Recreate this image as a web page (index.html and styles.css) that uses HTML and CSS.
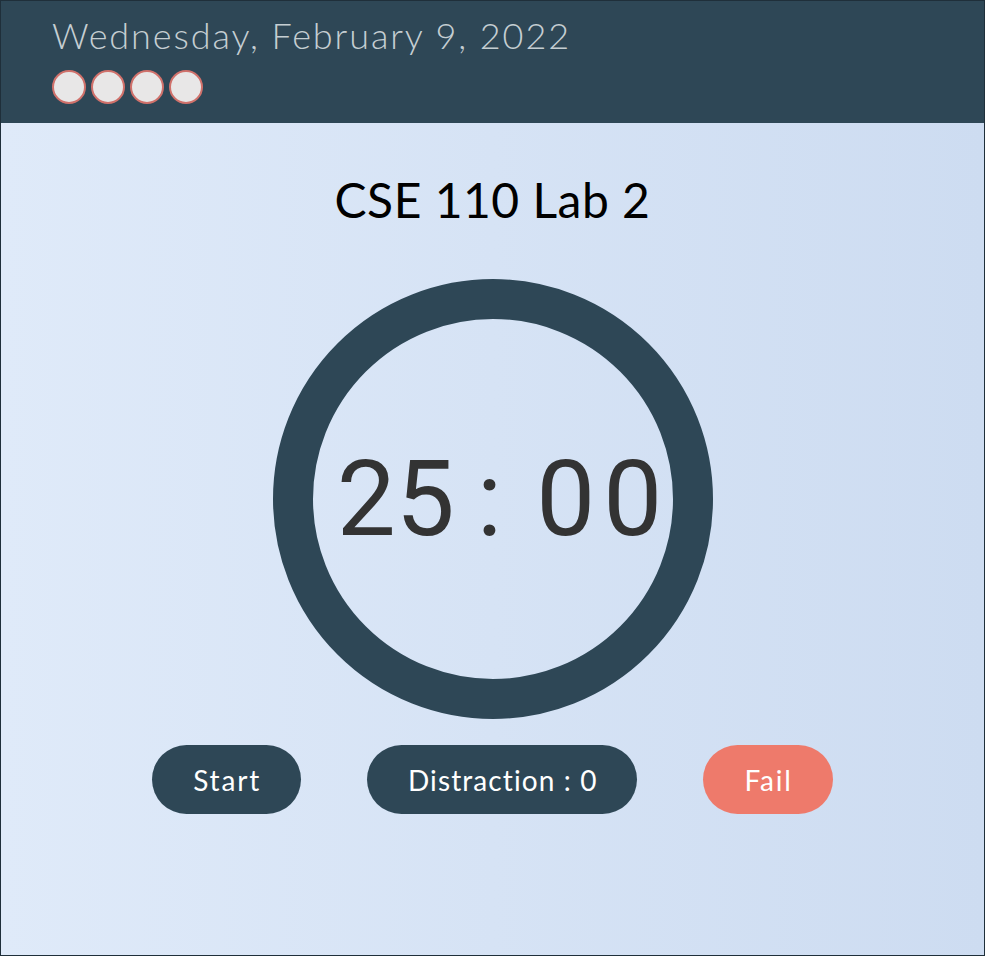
FILE: index.html
```html
<!DOCTYPE html>
<html lang="en">
<head>
<meta charset="utf-8">
<title>Pomodoro</title>
<link rel="stylesheet" href="styles.css">
</head>
<body>
<div class="app">
  <header class="topbar">
    <div class="date">Wednesday, February 9, 2022</div>
    <div class="dots">
      <span class="dot"></span><span class="dot"></span><span class="dot"></span><span class="dot"></span>
    </div>
  </header>
  <main class="main">
    <h1 class="title">CSE 110 Lab 2</h1>
    <div class="ring">
      <div class="time"><span class="mins">25</span><span class="colon">:</span><span class="secs">00</span></div>
    </div>
    <div class="buttons">
      <button class="btn">Start</button>
      <button class="btn counter">Distraction : 0</button>
      <button class="btn fail">Fail</button>
    </div>
  </main>
</div>
</body>
</html>
```
FILE: styles.css
```css
html, body {
  margin: 0;
  padding: 0;
}
body {
  font-family: "Lato", "Open Sans", sans-serif;
  background: #2e4756;
}
.app {
  width: 985px;
  height: 956px;
  box-sizing: border-box;
  border: 1px solid #1f2f3a;
  display: flex;
  flex-direction: column;
  overflow: hidden;
}
.topbar {
  background: #2e4756;
  height: 122px;
  box-sizing: border-box;
  padding: 13px 0 0 51px;
}
.date {
  color: #c5ced2;
  font-family: "Lato", sans-serif;
  font-weight: 300;
  font-size: 36px;
  line-height: 42px;
  letter-spacing: 1.9px;
}
.dots {
  display: flex;
  gap: 5px;
  margin-top: 14px;
}
.dot {
  width: 30px;
  height: 30px;
  border-radius: 50%;
  background: #e8e7e7;
  border: 2px solid #d0716b;
}
.main {
  flex: 1;
  background: linear-gradient(90deg, #dfeaf9 0%, #cddcf1 100%);
  display: flex;
  flex-direction: column;
  align-items: center;
}
.title {
  margin: 49px 0 0;
  font-family: "Lato", sans-serif;
  font-weight: 400;
  font-size: 48px;
  line-height: 56px;
  letter-spacing: 0.5px;
  color: #000;
}
.ring {
  margin-top: 51px;
  width: 440px;
  height: 440px;
  box-sizing: border-box;
  border: 40px solid #2e4756;
  border-radius: 50%;
  display: flex;
  align-items: center;
  justify-content: center;
}
.time {
  font-family: "Roboto", sans-serif;
  font-size: 105px;
  color: #333333;
  line-height: 1;
  white-space: nowrap;
  display: flex;
  margin-left: 22px;
}
.colon {
  margin-left: 22px;
}
.secs {
  margin-left: 34px;
  letter-spacing: 8px;
}
.buttons {
  margin-top: 26px;
  display: flex;
  gap: 66px;
}
.btn {
  height: 69px;
  border: none;
  border-radius: 35px;
  background: #2e4756;
  color: #ffffff;
  font-family: "Lato", sans-serif;
  font-size: 28px;
  letter-spacing: 1.8px;
  padding: 0 40px 0 41px;
}
.counter {
  letter-spacing: 1.1px;
}
.fail {
  background: #ee7a6b;
}
```
